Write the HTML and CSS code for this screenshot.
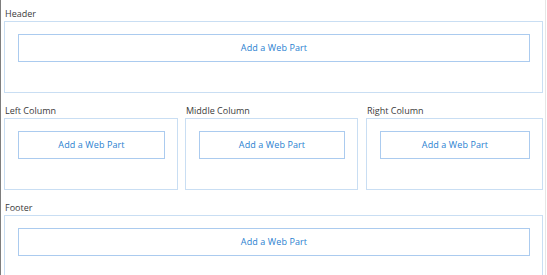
FILE: index.html
```html
<!DOCTYPE html>
<html lang="en">
<head>
    <meta charset="UTF-8" />
    <title>Page Layout</title>
    <link rel="stylesheet" href="styles.css">
</head>
<body>
<div class="page">
    <div class="zone">
        <div class="zone-title">Header</div>
        <div class="zone-box">
            <a class="add-part" href="#">Add a Web Part</a>
        </div>
    </div>

    <div class="columns">
        <div class="zone">
            <div class="zone-title">Left Column</div>
            <div class="zone-box">
                <a class="add-part" href="#">Add a Web Part</a>
            </div>
        </div>
        <div class="zone">
            <div class="zone-title">Middle Column</div>
            <div class="zone-box">
                <a class="add-part" href="#">Add a Web Part</a>
            </div>
        </div>
        <div class="zone zone-right">
            <div class="zone-title">Right Column</div>
            <div class="zone-box">
                <a class="add-part" href="#">Add a Web Part</a>
            </div>
        </div>
    </div>

    <div class="zone">
        <div class="zone-title">Footer</div>
        <div class="zone-box">
            <a class="add-part" href="#">Add a Web Part</a>
        </div>
    </div>
</div>
</body>
</html>
```

FILE: styles.css
```css
body {
    margin: 0;
    font-family: "Open Sans", Lato, Arial, sans-serif;
    background-color: white;
}
.page {
    width: 546px;
    height: 275px;
    box-sizing: border-box;
    border-left: 1px solid #7d7d7d;
    border-right: 1px solid #e6e6e6;
    padding: 7px 2px 0 3px;
    overflow: hidden;
}
.zone {
    margin-bottom: 11px;
}
.zone-title {
    font-size: 9px;
    line-height: 14px;
    color: #3b3b3b;
    padding-left: 1px;
}
.zone-box {
    height: 72px;
    box-sizing: border-box;
    border: 1px solid #c9def3;
    padding: 12px 12px 0 13px;
}
.add-part {
    display: block;
    height: 28px;
    box-sizing: border-box;
    border: 1px solid #abcbef;
    line-height: 26px;
    text-align: center;
    font-size: 9px;
    color: #2a7fd0;
    text-decoration: none;
    letter-spacing: 0.1px;
}
.columns {
    display: grid;
    grid-template-columns: 174px 173px 1fr;
    column-gap: 7px;
}
.zone-right {
    margin-left: 1px;
}
```
